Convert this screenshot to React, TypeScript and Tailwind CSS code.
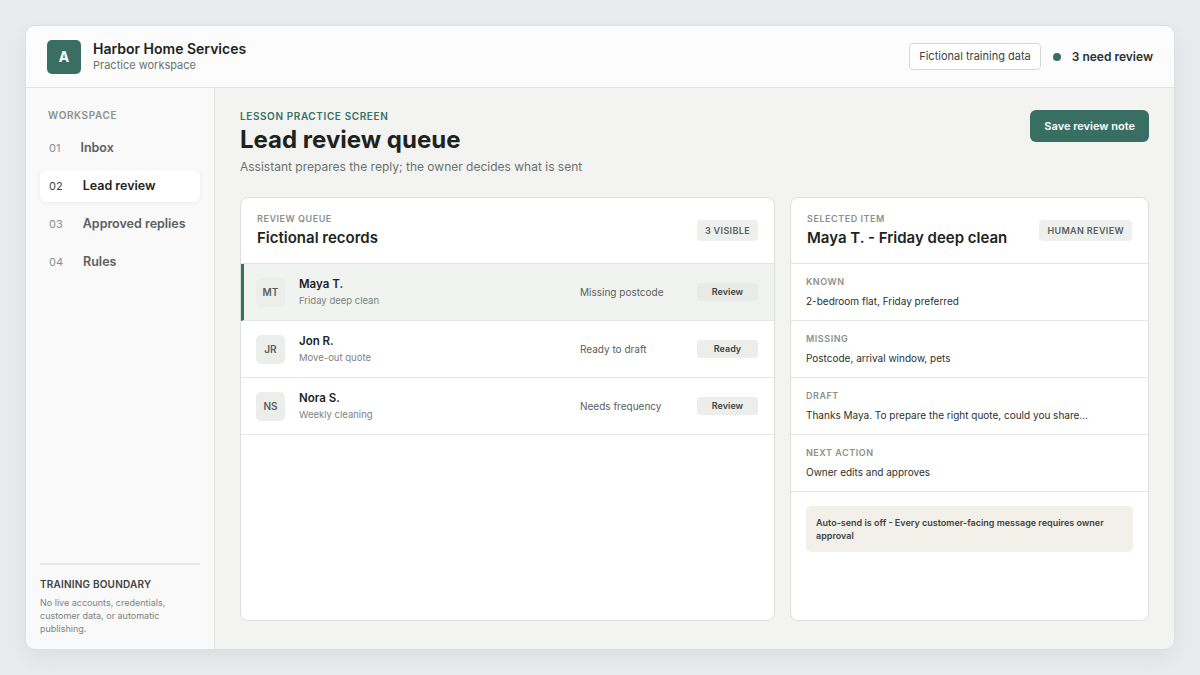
import React from "react";

const rows = [
  { initials: "MT", name: "Maya T.", sub: "Friday deep clean", status: "Missing postcode", badge: "Review", active: true },
  { initials: "JR", name: "Jon R.", sub: "Move-out quote", status: "Ready to draft", badge: "Ready", active: false },
  { initials: "NS", name: "Nora S.", sub: "Weekly cleaning", status: "Needs frequency", badge: "Review", active: false },
];

const details = [
  { label: "Known", text: "2-bedroom flat, Friday preferred" },
  { label: "Missing", text: "Postcode, arrival window, pets" },
  { label: "Draft", text: "Thanks Maya. To prepare the right quote, could you share..." },
  { label: "Next action", text: "Owner edits and approves" },
];

const nav = [
  { n: "01", label: "Inbox" },
  { n: "02", label: "Lead review", active: true },
  { n: "03", label: "Approved replies" },
  { n: "04", label: "Rules" },
];

export default function App() {
  return (
    <div className="w-[1200px] h-[675px] bg-[#e9ebed] p-[25px] font-[Inter] text-[#1d2321]">
      <div className="h-[625px] bg-[#f3f4f2] rounded-[10px] border border-[#dcdfdd] shadow-[0_8px_24px_rgba(0,0,0,0.06)] overflow-hidden flex flex-col">
        {/* Header */}
        <header className="h-[62px] shrink-0 bg-[#fbfcfb] border-b border-[#e2e5e2] flex items-center justify-between px-[21px]">
          <div className="flex items-center gap-[12px]">
            <div className="w-[34px] h-[34px] rounded-[5px] bg-[#386f62] text-white flex items-center justify-center text-[14px] font-bold">A</div>
            <div>
              <div className="text-[14px] font-semibold leading-[18px]">Harbor Home Services</div>
              <div className="text-[11px] text-[#6b716e] leading-[15px]">Practice workspace</div>
            </div>
          </div>
          <div className="flex items-center gap-[11px]">
            <div className="border border-[#d6dad7] bg-white rounded-[4px] px-[9px] h-[27px] flex items-center text-[11px] text-[#3d4441]">Fictional training data</div>
            <div className="flex items-center gap-[11px] pl-[1px]">
              <span className="w-[8px] h-[8px] rounded-full bg-[#386f62]"></span>
              <span className="text-[12px] font-semibold text-[#2b302e]">3 need review</span>
            </div>
          </div>
        </header>
        <div className="flex flex-1 min-h-0">
          {/* Sidebar */}
          <aside className="w-[189px] shrink-0 bg-[#f8f9f8] border-r border-[#e2e5e2] flex flex-col justify-between px-[14px] pt-[20px] pb-[14px]">
            <div>
              <div className="text-[10px] font-semibold tracking-[0.06em] text-[#8a908d] px-[8px] mb-[9px]">WORKSPACE</div>
              <nav className="flex flex-col gap-[6px]">
                {nav.map((it) => (
                  <div
                    key={it.n}
                    className={`h-[32px] rounded-[6px] flex items-center px-[9px] gap-[20px] ${it.active ? "bg-white shadow-[0_1px_4px_rgba(0,0,0,0.06)]" : ""}`}
                  >
                    <span className={`text-[11px] ${it.active ? "text-[#3d4441]" : "text-[#8a908d]"}`}>{it.n}</span>
                    <span className={`text-[12.5px] font-semibold ${it.active ? "text-[#1d2321]" : "text-[#5a605d]"}`}>{it.label}</span>
                  </div>
                ))}
              </nav>
            </div>
            <div className="border-t-2 border-[#e6e8e6] pt-[12px]">
              <div className="text-[10px] font-semibold tracking-[0.02em] text-[#3d4441] mb-[4px]">TRAINING BOUNDARY</div>
              <p className="text-[9px] leading-[13px] text-[#7c827f]">No live accounts, credentials, customer data, or automatic publishing.</p>
            </div>
          </aside>
          {/* Main */}
          <main className="flex-1 px-[25px] pt-[21px] pb-[28px] flex flex-col">
            <div className="flex justify-between items-start">
              <div>
                <div className="text-[10px] font-semibold tracking-[0.06em] text-[#386f62]">LESSON PRACTICE SCREEN</div>
                <h1 className="text-[24px] font-bold leading-[30px] mt-[1px]">Lead review queue</h1>
                <p className="text-[12px] text-[#6b716e] mt-[3px]">Assistant prepares the reply; the owner decides what is sent</p>
              </div>
              <button className="mt-[1px] h-[32px] px-[14px] rounded-[6px] bg-[#386f62] text-white text-[11px] font-semibold">Save review note</button>
            </div>
            <div className="flex gap-[15px] mt-[21px] flex-1 min-h-0">
              {/* Queue */}
              <section className="flex-1 bg-white rounded-[8px] border border-[#dcdfdd] overflow-hidden">
                <div className="h-[66px] border-b border-[#e2e5e2] px-[16px] flex items-center justify-between">
                  <div>
                    <div className="text-[9px] font-semibold tracking-[0.06em] text-[#8a908d]">REVIEW QUEUE</div>
                    <div className="text-[15px] font-semibold mt-[2px]">Fictional records</div>
                  </div>
                  <span className="h-[21px] px-[8px] rounded-[4px] bg-[#eef0ee] text-[9px] font-semibold tracking-[0.04em] text-[#5a605d] flex items-center">3 VISIBLE</span>
                </div>
                {rows.map((r) => (
                  <div
                    key={r.initials}
                    className={`h-[57px] border-b border-[#e6e8e6] flex items-center pr-[16px] ${r.active ? "bg-[#f1f3f1] border-l-[3px] border-l-[#386f62] pl-[12px]" : "pl-[15px]"}`}
                  >
                    <div className="w-[29px] h-[29px] rounded-[5px] bg-[#eceeec] flex items-center justify-center text-[10px] font-semibold text-[#5a605d]">{r.initials}</div>
                    <div className="ml-[14px] w-[281px]">
                      <div className="text-[11.5px] font-semibold">{r.name}</div>
                      <div className="text-[9.5px] text-[#7c827f] mt-[1px]">{r.sub}</div>
                    </div>
                    <div className="flex-1 text-[10px] text-[#5a605d]">{r.status}</div>
                    <span className={`w-[61px] h-[18px] rounded-[3px] flex items-center justify-center text-[9px] font-semibold text-[#3d4441] ${r.active ? "bg-[#e9ebe9]" : "bg-[#eceeec]"}`}>{r.badge}</span>
                  </div>
                ))}
              </section>
              {/* Detail */}
              <section className="w-[359px] bg-white rounded-[8px] border border-[#dcdfdd] overflow-hidden">
                <div className="h-[66px] border-b border-[#e2e5e2] px-[16px] flex items-center justify-between">
                  <div>
                    <div className="text-[9px] font-semibold tracking-[0.06em] text-[#8a908d]">SELECTED ITEM</div>
                    <div className="text-[15px] font-semibold mt-[2px]">Maya T. - Friday deep clean</div>
                  </div>
                  <span className="h-[21px] px-[8px] rounded-[4px] bg-[#eef0ee] text-[9px] font-semibold tracking-[0.04em] text-[#5a605d] flex items-center">HUMAN REVIEW</span>
                </div>
                {details.map((d) => (
                  <div key={d.label} className="h-[57px] border-b border-[#e6e8e6] px-[15px] flex flex-col justify-center">
                    <div className="text-[9px] font-semibold tracking-[0.06em] text-[#8a908d] uppercase">{d.label}</div>
                    <div className="text-[10px] text-[#2b302e] mt-[5px]">{d.text}</div>
                  </div>
                ))}
                <div className="px-[15px] pt-[14px]">
                  <div className="rounded-[5px] bg-[#f3efe9] pl-[10px] pr-[20px] py-[10px] text-[9px] font-semibold leading-[13px] text-[#3d4441]">
                    Auto-send is off - Every customer-facing message requires owner approval
                  </div>
                </div>
              </section>
            </div>
          </main>
        </div>
      </div>
    </div>
  );
}
